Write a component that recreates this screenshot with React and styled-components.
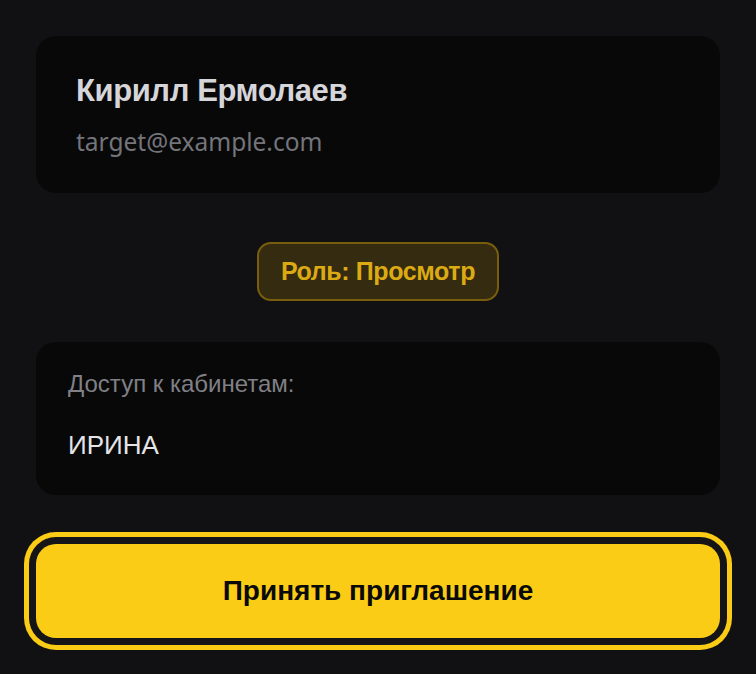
import React from "react";
import styled, { createGlobalStyle } from "styled-components";

const GlobalStyle = createGlobalStyle`
  html, body {
    margin: 0;
    padding: 0;
    background: #111113;
  }
  body {
    font-family: "Liberation Sans", Arial, sans-serif;
  }
`;

const Page = styled.div`
  box-sizing: border-box;
  width: 756px;
  padding: 36px;
  display: flex;
  flex-direction: column;
  align-items: stretch;
`;

const Card = styled.div`
  background: #080808;
  border-radius: 20px;
  padding: ${(p) => p.$pad};
  display: flex;
  flex-direction: column;
`;

const Name = styled.h2`
  margin: 0;
  font-size: 31px;
  font-weight: 700;
  line-height: 37px;
  color: #d6d6da;
  letter-spacing: -0.4px;
`;

const Email = styled.div`
  margin-top: 17px;
  font-family: "Noto Sans", "Open Sans", sans-serif;
  font-size: 24.5px;
  line-height: 32px;
  color: #74747b;
`;

const BadgeRow = styled.div`
  display: flex;
  justify-content: center;
  margin: 49px 0 41px;
`;

const Badge = styled.div`
  box-sizing: border-box;
  height: 59px;
  padding: 0 22px;
  display: flex;
  align-items: center;
  border-radius: 14px;
  border: 2px solid rgba(234, 179, 8, 0.38);
  background: rgba(234, 179, 8, 0.16);
  color: #dcaa12;
  font-size: 25px;
  font-weight: 700;
  letter-spacing: -0.4px;
`;

const Label = styled.div`
  font-size: 24px;
  line-height: 28px;
  color: #808086;
`;

const Cabinet = styled.div`
  margin-top: 32px;
  font-size: 26px;
  line-height: 30px;
  color: #e4e4e7;
`;

const AcceptButton = styled.button`
  margin-top: 49px;
  height: 94px;
  border: none;
  border-radius: 20px;
  background: #facc15;
  color: #0a0a0a;
  font-family: "Liberation Sans", Arial, sans-serif;
  font-size: 28px;
  font-weight: 700;
  cursor: pointer;
  box-shadow: 0 0 0 7px #151517, 0 0 0 12px #facc15;
`;

export default function App() {
  return (
    <>
      <GlobalStyle />
      <Page>
        <Card $pad="36px 40px 35px">
          <Name>Кирилл Ермолаев</Name>
          <Email>target@example.com</Email>
        </Card>
        <BadgeRow>
          <Badge>Роль: Просмотр</Badge>
        </BadgeRow>
        <Card $pad="28px 32px 35px">
          <Label>Доступ к кабинетам:</Label>
          <Cabinet>ИРИНА</Cabinet>
        </Card>
        <AcceptButton>Принять приглашение</AcceptButton>
      </Page>
    </>
  );
}
